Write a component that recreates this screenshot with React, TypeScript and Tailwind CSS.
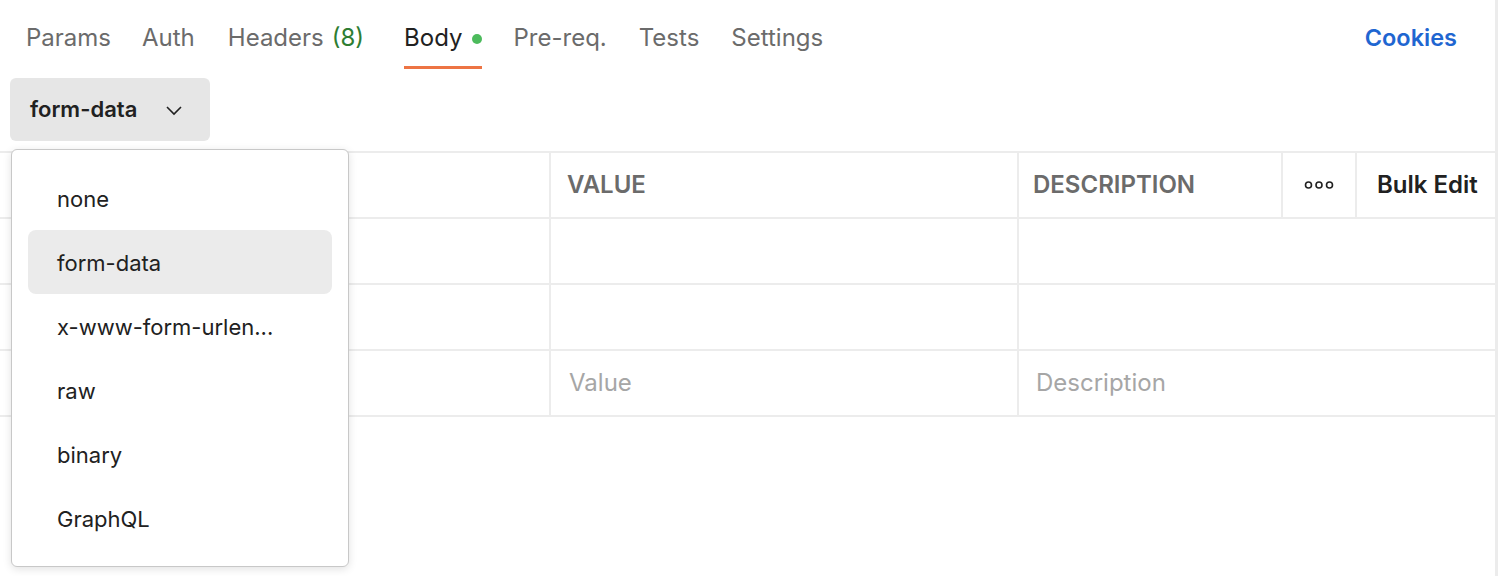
import { useState } from "react";

const tabs = [
  { label: "Params", gap: "" },
  { label: "Auth", gap: "ml-[31px]" },
  { label: "Headers", count: "(8)", gap: "ml-[33px]" },
  { label: "Body", active: true, dot: true, gap: "ml-[40px]" },
  { label: "Pre-req.", gap: "ml-[32px]" },
  { label: "Tests", gap: "ml-[32px]" },
  { label: "Settings", gap: "ml-[32px]" },
];

const bodyTypes = ["none", "form-data", "x-www-form-urlen...", "raw", "binary", "GraphQL"];

const App = () => {
  const [bodyType, setBodyType] = useState("form-data");

  return (
    <div className="relative h-[576px] w-[1498px] overflow-hidden bg-white font-['Inter','Noto_Sans',sans-serif] border-r-[3px] border-[#ececec]">
      {/* tabs */}
      <div className="flex h-[70px] items-stretch pl-[26px] pr-[38px]">
        {tabs.map((t) => (
          <div
            key={t.label}
            className={
              "relative flex items-center pt-[6px] text-[24px] " +
              t.gap +
              " " +
              (t.active ? "text-[#212121]" : "text-[#6b6b6b]")
            }
          >
            {t.label}
            {t.count && <span className="ml-[8px] text-[#2e7d32]">{t.count}</span>}
            {t.dot && <span className="ml-[9px] mt-[1px] h-[10px] w-[10px] rounded-full bg-[#4cbb5c]" />}
            {t.active && <span className="absolute bottom-[1px] left-0 right-0 h-[3px] bg-[#ed7444]" />}
          </div>
        ))}
        <div className="ml-auto flex items-center pt-[6px] text-[23.5px] font-semibold text-[#1f66d1]">Cookies</div>
      </div>

      {/* body type selector */}
      <div className="mt-[8px] pl-[10px]">
        <button className="flex h-[63px] w-[200px] items-center rounded-[6px] bg-[#e6e6e6] pl-[20px] text-[22px] font-semibold text-[#212121]">
          {bodyType}
          <svg className="ml-[27px] h-[20px] w-[20px]" viewBox="0 0 20 20" fill="none" stroke="#212121" strokeWidth="1.6">
            <polyline points="3,7 10,14 17,7" />
          </svg>
        </button>
      </div>

      {/* table */}
      <div className="mt-[10px] border-t-2 border-[#ececec] text-[24px]">
        <div className="flex h-[66px] border-b-2 border-[#ececec]">
          <div className="w-[551px] border-r-2 border-[#ececec]" />
          <div className="flex w-[468px] items-center border-r-2 border-[#ececec] pl-[16px] font-semibold text-[#6b6b6b]">VALUE</div>
          <div className="flex w-[264px] items-center border-r-2 border-[#ececec] pl-[14px] font-semibold text-[#6b6b6b]">DESCRIPTION</div>
          <div className="flex w-[74px] items-center justify-center border-r-2 border-[#ececec]">
            <svg width="30" height="10" viewBox="0 0 30 10" fill="none" stroke="#212121" strokeWidth="1.6">
              <circle cx="4.5" cy="5" r="3" />
              <circle cx="15" cy="5" r="3" />
              <circle cx="25.5" cy="5" r="3" />
            </svg>
          </div>
          <div className="flex flex-1 items-center pl-[20px] font-semibold text-[#212121]">Bulk Edit</div>
        </div>
        {[0, 1, 2].map((r) => (
          <div key={r} className="flex h-[66px] border-b-2 border-[#ececec]">
            <div className="w-[551px] border-r-2 border-[#ececec]" />
            <div className="flex w-[468px] items-center border-r-2 border-[#ececec] pl-[18px] text-[#a6a6a6]">
              {r === 2 ? "Value" : ""}
            </div>
            <div className="flex flex-1 items-center pl-[17px] text-[#a6a6a6]">{r === 2 ? "Description" : ""}</div>
          </div>
        ))}
      </div>

      {/* dropdown menu */}
      <div className="absolute left-[11px] top-[149px] w-[338px] rounded-[6px] border border-[#c8c8c8] bg-white p-[16px] shadow-[0_2px_8px_rgba(0,0,0,0.12)]">
        {bodyTypes.map((b) => (
          <div
            key={b}
            onClick={() => setBodyType(b)}
            className={
              "flex h-[64px] items-center rounded-[8px] pl-[29px] pt-[3px] text-[22px] text-[#212121] " +
              (b === bodyType ? "bg-[#ebebeb]" : "")
            }
          >
            {b}
          </div>
        ))}
      </div>
    </div>
  );
};

export default App;
